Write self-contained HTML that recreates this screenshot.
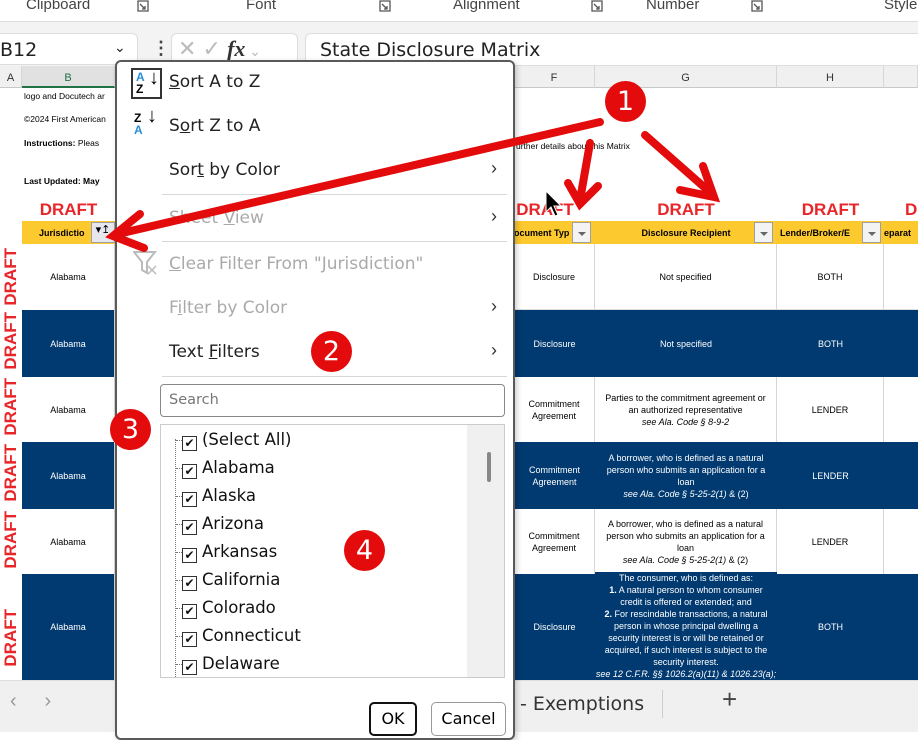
<!DOCTYPE html>
<html><head><meta charset="utf-8"><style>
*{margin:0;padding:0;box-sizing:border-box}
body{width:918px;height:732px;overflow:hidden;position:relative;background:#fff;font-family:"Liberation Sans",Arial,sans-serif;}
.a{position:absolute}
.rib{left:0;top:0;width:918px;height:21px;background:#fff;font-size:15px;color:#444}
.dl{position:absolute;top:0px}
.colh{top:66px;height:22px;background:#f0f0f0;border-bottom:1px solid #c8c8c8;font-size:11px;color:#333;text-align:center;line-height:24px;border-right:1px solid #d6d6d6}
.cell{font-size:9px;text-align:center;display:flex;align-items:center;justify-content:center;border-right:1px solid #d6d6d6;line-height:12px}
.blue{background:#003a70;color:#fff}
.draft{color:#e8262a;font-weight:bold;font-size:17px;text-align:center}
.vd{color:#e8262a;font-weight:bold;font-size:17px;writing-mode:vertical-rl;transform:rotate(180deg);white-space:nowrap;position:absolute;left:1px;line-height:20px}
.hdr{top:221px;height:23px;background:#fcc92e;font-size:9px;font-weight:bold;display:flex;align-items:center;justify-content:center}
.fb{width:19px;height:21px;border:1px solid #a0a0a0;background:#f3f3f3;position:absolute;top:222px}
.fb:after{content:"";position:absolute;left:5px;top:9px;border-left:4px solid transparent;border-right:4px solid transparent;border-top:4px solid #666}
.mi{position:absolute;left:52px;font-size:17px;font-family:"DejaVu Sans",sans-serif;color:#222}
.dis{color:#aaa}
.chev{position:absolute;left:374px;font-size:18px;color:#333}
.sep{position:absolute;left:45px;width:345px;height:1px;background:#d8d8d8}
.li{position:absolute;left:21px;font-size:16.5px;font-family:"DejaVu Sans",sans-serif;color:#111;height:28px;line-height:28px;white-space:nowrap}
.li:before{content:"";position:absolute;left:-6px;top:14px;width:6px;border-top:1px dotted #777}
.cb{display:inline-block;width:15px;height:15px;border:1px solid #333;vertical-align:-2px;margin-right:5px;font-size:12px;line-height:13px;text-align:center;font-weight:bold;background:#fff}
.circ{position:absolute;width:41px;height:41px;border-radius:50%;background:#e30b0b;color:#fff;font-size:27px;text-align:center;line-height:41px;font-family:"DejaVu Sans",sans-serif}
</style></head><body>
<div class="a rib">
<span class="a" style="left:26px;top:-4px">Clipboard</span>
<svg class="dl" style="left:137px" width="12" height="12"><path d="M1 1H11V11H1Z M3 4L8 9M5 9H8V6" fill="none" stroke="#555" stroke-width="1.3"/></svg>
<span class="a" style="left:246px;top:-4px">Font</span>
<svg class="dl" style="left:379px" width="12" height="12"><path d="M1 1H11V11H1Z M3 4L8 9M5 9H8V6" fill="none" stroke="#555" stroke-width="1.3"/></svg>
<span class="a" style="left:453px;top:-4px">Alignment</span>
<svg class="dl" style="left:591px" width="12" height="12"><path d="M1 1H11V11H1Z M3 4L8 9M5 9H8V6" fill="none" stroke="#555" stroke-width="1.3"/></svg>
<span class="a" style="left:646px;top:-4px">Number</span>
<svg class="dl" style="left:751px" width="12" height="12"><path d="M1 1H11V11H1Z M3 4L8 9M5 9H8V6" fill="none" stroke="#555" stroke-width="1.3"/></svg>
<span class="a" style="left:884px;top:-4px">Style</span>
</div>
<div class="a" style="left:0;top:21px;width:918px;height:45px;background:#f3f3f3;border-top:1px solid #ddd"></div>
<div class="a" style="left:0;top:33px;width:138px;height:32px;background:#fff;border:1px solid #ddd;border-left:none;border-radius:0 6px 0 0;font-size:19px;line-height:32px;color:#222;font-family:'DejaVu Sans',sans-serif">B12<span style="position:absolute;left:114px;top:-2px;font-size:14px">&#8964;</span></div>
<div class="a" style="left:152px;top:38px;font-size:18px;color:#444;font-weight:bold">&#8942;</div>
<div class="a" style="left:171px;top:33px;width:127px;height:32px;background:#fff;border:1px solid #ddd;border-radius:6px;color:#bbb;font-size:22px;line-height:30px;padding-left:6px">&#10005; &#10003; <i style="color:#333;font-family:'Liberation Serif';font-weight:bold">fx</i><span style="font-size:14px"> &#8964;</span></div>
<div class="a" style="left:305px;top:33px;width:613px;height:33px;background:#fff;border:1px solid #ddd;border-right:none;border-radius:6px 0 0 0;font-size:19px;line-height:33px;padding-left:14px;color:#222;font-family:'DejaVu Sans',sans-serif">State Disclosure Matrix</div>
<!-- column headers -->
<div class="a colh" style="left:0;width:22px">A</div>
<div class="a colh" style="left:22px;width:93px;color:#217346;border-bottom:2px solid #217346;background:#e1e1e1">B</div>
<div class="a colh" style="left:514px;width:81px">F</div>
<div class="a colh" style="left:595px;width:182px">G</div>
<div class="a colh" style="left:777px;width:107px">H</div>
<div class="a colh" style="left:884px;width:34px"></div>
<!-- text rows -->
<div class="a" style="left:24px;top:91px;font-size:8.5px">logo and Docutech ar</div>
<div class="a" style="left:24px;top:114px;font-size:8.5px">©2024 First American</div>
<div class="a" style="left:24px;top:138px;font-size:8.5px"><b>Instructions:</b> Pleas</div>
<div class="a" style="left:24px;top:176px;font-size:8.5px;font-weight:bold">Last Updated: May</div>
<div class="a" style="left:516px;top:141px;font-size:8.5px">urther details about this Matrix</div>
<div class="a draft" style="left:22px;top:200px;width:93px">DRAFT</div>
<div class="a draft" style="left:505px;top:200px;width:80px">DRAFT</div>
<div class="a draft" style="left:595px;top:200px;width:182px">DRAFT</div>
<div class="a draft" style="left:777px;top:200px;width:107px">DRAFT</div>
<div class="a draft" style="left:905px;top:200px;">D</div>
<!-- header -->
<div class="a hdr" style="left:22px;width:93px;justify-content:flex-start;padding-left:17px">Jurisdictio</div>
<div class="a" style="left:91px;top:222px;width:24px;height:21px;border:1px solid #a0a0a0;background:#e6e6ee;font-size:11px;text-align:center">&#9662;&#8613;</div>
<div class="a hdr" style="left:514px;width:81px;justify-content:flex-start">ocument Typ</div><div class="fb" style="left:572px"></div>
<div class="a hdr" style="left:595px;width:182px">Disclosure Recipient</div><div class="fb" style="left:754px"></div>
<div class="a hdr" style="left:777px;width:107px;justify-content:flex-start;padding-left:3px">Lender/Broker/E</div><div class="fb" style="left:862px"></div>
<div class="a hdr" style="left:884px;width:34px;justify-content:flex-start">eparat</div>
<!-- vertical drafts -->
<div class="vd" style="top:248px">DRAFT</div>
<div class="vd" style="top:312px">DRAFT</div>
<div class="vd" style="top:378px">DRAFT</div>
<div class="vd" style="top:444px">DRAFT</div>
<div class="vd" style="top:511px">DRAFT</div>
<div class="vd" style="top:609px">DRAFT</div>

<div class="a cell" style="left:22px;top:244px;width:93px;height:66px">Alabama</div>
<div class="a cell blue" style="left:22px;top:310px;width:93px;height:67px">Alabama</div>
<div class="a cell" style="left:22px;top:377px;width:93px;height:65px">Alabama</div>
<div class="a cell blue" style="left:22px;top:442px;width:93px;height:67px">Alabama</div>
<div class="a cell" style="left:22px;top:509px;width:93px;height:65px">Alabama</div>
<div class="a cell blue" style="left:22px;top:574px;width:93px;height:106px">Alabama</div>

<div class="a" style="left:514px;top:244px;width:404px;height:66px;border-bottom:1px solid #ddd"></div>
<div class="a cell" style="left:514px;top:244px;width:81px;height:66px">Disclosure</div>
<div class="a cell" style="left:595px;top:244px;width:182px;height:66px">Not specified</div>
<div class="a cell" style="left:777px;top:244px;width:107px;height:66px">BOTH</div>

<div class="a blue" style="left:514px;top:310px;width:404px;height:67px"></div>
<div class="a cell blue" style="left:514px;top:310px;width:81px;height:67px;border:none">Disclosure</div>
<div class="a cell blue" style="left:595px;top:310px;width:182px;height:67px;border:none">Not specified</div>
<div class="a cell blue" style="left:777px;top:310px;width:107px;height:67px;border:none">BOTH</div>

<div class="a cell" style="left:514px;top:377px;width:81px;height:65px">Commitment<br>Agreement</div>
<div class="a cell" style="left:595px;top:377px;width:182px;height:65px;flex-direction:column">Parties to the commitment agreement or<br>an authorized representative<br><i>see Ala. Code § 8-9-2</i></div>
<div class="a cell" style="left:777px;top:377px;width:107px;height:65px">LENDER</div>

<div class="a blue" style="left:514px;top:442px;width:404px;height:67px"></div>
<div class="a cell blue" style="left:514px;top:442px;width:81px;height:67px;border:none">Commitment<br>Agreement</div>
<div class="a cell blue" style="left:595px;top:442px;width:182px;height:67px;border:none;flex-direction:column">A borrower, who is defined as a natural<br>person who submits an application for a<br>loan<br><span><i>see Ala. Code § 5-25-2(1)</i> &amp; (2)</span></div>
<div class="a cell blue" style="left:777px;top:442px;width:107px;height:67px;border:none">LENDER</div>

<div class="a cell" style="left:514px;top:509px;width:81px;height:65px">Commitment<br>Agreement</div>
<div class="a cell" style="left:595px;top:509px;width:182px;height:65px;flex-direction:column">A borrower, who is defined as a natural<br>person who submits an application for a<br>loan<br><span><i>see Ala. Code § 5-25-2(1)</i> &amp; (2)</span></div>
<div class="a cell" style="left:777px;top:509px;width:107px;height:65px">LENDER</div>

<div class="a blue" style="left:514px;top:574px;width:404px;height:106px"></div>
<div class="a cell blue" style="left:514px;top:574px;width:81px;height:106px;border:none">Disclosure</div>
<div class="a blue" style="left:595px;top:572px;width:182px;height:108px;font-size:9px;text-align:center;line-height:12px;overflow:hidden">The consumer, who is defined as:<br><b>1.</b> A natural person to whom consumer<br>credit is offered or extended; and<br><b>2.</b> For rescindable transactions, a natural<br>person in whose principal dwelling a<br>security interest is or will be retained or<br>acquired, if such interest is subject to the<br>security interest.<br><i>see 12 C.F.R. §§ 1026.2(a)(11) &amp; 1026.23(a);</i></div>
<div class="a cell blue" style="left:777px;top:574px;width:107px;height:106px;border:none">BOTH</div>

<!-- tab bar -->
<div class="a" style="left:0;top:680px;width:918px;height:52px;background:#f0f0f0;border-top:1px solid #ddd"></div>
<div class="a" style="left:10px;top:690px;font-size:20px;color:#999">&#8249;&nbsp;&nbsp;&nbsp;&nbsp;&nbsp;&#8250;</div>
<div class="a" style="left:520px;top:693px;font-size:19px;color:#333;font-family:'DejaVu Sans',sans-serif">- Exemptions</div>
<div class="a" style="left:662px;top:690px;width:1px;height:28px;background:#ccc"></div>
<div class="a" style="left:722px;top:684px;font-size:26px;color:#444">+</div>

<!-- dropdown menu -->
<div class="a" style="left:115px;top:60px;width:400px;height:680px;background:#fff;border:2px solid #5a5a5a;border-radius:6px;box-shadow:2px 2px 6px rgba(0,0,0,.2)">
 <div class="a" style="left:14px;top:6px;width:31px;height:31px;border:2px solid #333;font-size:12px;line-height:12px;font-weight:bold;padding:1px 3px"><span style="color:#2a8fd6">A</span><br>Z<span style="position:absolute;left:16px;top:2px;font-size:20px;font-weight:normal">&#8595;</span></div>
 <div class="mi" style="top:10px"><u>S</u>ort A to Z</div>
 <div class="a" style="left:17px;top:50px;font-size:12px;line-height:12px;font-weight:bold">Z<br><span style="color:#2a8fd6">A</span><span style="position:absolute;left:13px;top:-2px;font-size:20px;font-weight:normal">&#8595;</span></div>
 <div class="mi" style="top:54px">S<u>o</u>rt Z to A</div>
 <div class="mi" style="top:98px">Sor<u>t</u> by Color</div><div class="chev" style="top:96px">&#8250;</div>
 <div class="sep" style="top:132px"></div>
 <div class="mi dis" style="top:146px">Sheet <u>V</u>iew</div><div class="chev dis" style="top:144px">&#8250;</div>
 <div class="sep" style="top:179px"></div>
 <svg class="a" style="left:16px;top:188px" width="26" height="26"><path d="M1 2H22L14 12V23L9 20V12Z" fill="none" stroke="#bbb" stroke-width="2"/><path d="M15 16L23 24M23 16L15 24" stroke="#bbb" stroke-width="1.5"/></svg>
 <div class="mi dis" style="top:192px"><u>C</u>lear Filter From "Jurisdiction"</div>
 <div class="mi dis" style="top:236px">F<u>i</u>lter by Color</div><div class="chev dis" style="top:234px">&#8250;</div>
 <div class="mi" style="top:280px">Text <u>F</u>ilters</div><div class="chev" style="top:278px">&#8250;</div>
 <div class="sep" style="top:314px"></div>
 <div class="a" style="left:43px;top:322px;width:345px;height:33px;border:1px solid #888;border-radius:4px;font-size:14.5px;color:#777;line-height:31px;padding-left:8px;font-family:'DejaVu Sans',sans-serif">Search</div>
 <div class="a" style="left:43px;top:362px;width:345px;height:254px;border:1px solid #ccc;overflow:hidden">
  <div class="a" style="left:306px;top:0;width:38px;height:254px;background:#f0f0f0"></div>
  <div class="a" style="left:326px;top:27px;width:4px;height:30px;background:#888;border-radius:2px"></div>
  <div class="a" style="left:14px;top:14px;height:244px;border-left:1px dotted #777"></div>
  <div class="li" style="top:1px"><span class="cb">&#10004;</span>(Select All)</div>
  <div class="li" style="top:29px"><span class="cb">&#10004;</span>Alabama</div>
  <div class="li" style="top:57px"><span class="cb">&#10004;</span>Alaska</div>
  <div class="li" style="top:85px"><span class="cb">&#10004;</span>Arizona</div>
  <div class="li" style="top:113px"><span class="cb">&#10004;</span>Arkansas</div>
  <div class="li" style="top:141px"><span class="cb">&#10004;</span>California</div>
  <div class="li" style="top:169px"><span class="cb">&#10004;</span>Colorado</div>
  <div class="li" style="top:197px"><span class="cb">&#10004;</span>Connecticut</div>
  <div class="li" style="top:225px"><span class="cb">&#10004;</span>Delaware</div>
 </div>
 <div class="a" style="left:252px;top:640px;width:48px;height:34px;border:2px solid #111;border-radius:5px;font-size:16px;text-align:center;line-height:30px;font-family:'DejaVu Sans',sans-serif">OK</div>
 <div class="a" style="left:314px;top:640px;width:75px;height:34px;border:1px solid #999;border-radius:5px;font-size:16px;text-align:center;line-height:32px;font-family:'DejaVu Sans',sans-serif">Cancel</div>
</div>
<!-- mouse cursor -->
<svg class="a" style="left:544px;top:190px" width="20" height="30"><path d="M2 1 L2 22 L7 17 L11 26 L14 25 L10 16 L17 16 Z" fill="#000" stroke="#fff" stroke-width="1"/></svg>
<!-- arrows -->
<svg class="a" style="left:0;top:0" width="918" height="732">
 <g stroke="#e30b0b" stroke-width="8" stroke-linecap="round" fill="none">
  <line x1="600" y1="122" x2="118" y2="234"/>
  <polyline points="140,214 113,236 144,248"/>
  <line x1="590" y1="143" x2="580" y2="200"/>
  <polyline points="568,183 580,204 598,186"/>
  <line x1="645" y1="135" x2="712" y2="194"/>
  <polyline points="680,190 714,197 703,166"/>
 </g>
</svg>
<div class="circ" style="left:605px;top:81px">1</div>
<div class="circ" style="left:311px;top:331px">2</div>
<div class="circ" style="left:110px;top:409px">3</div>
<div class="circ" style="left:344px;top:530px">4</div>
</body></html>
